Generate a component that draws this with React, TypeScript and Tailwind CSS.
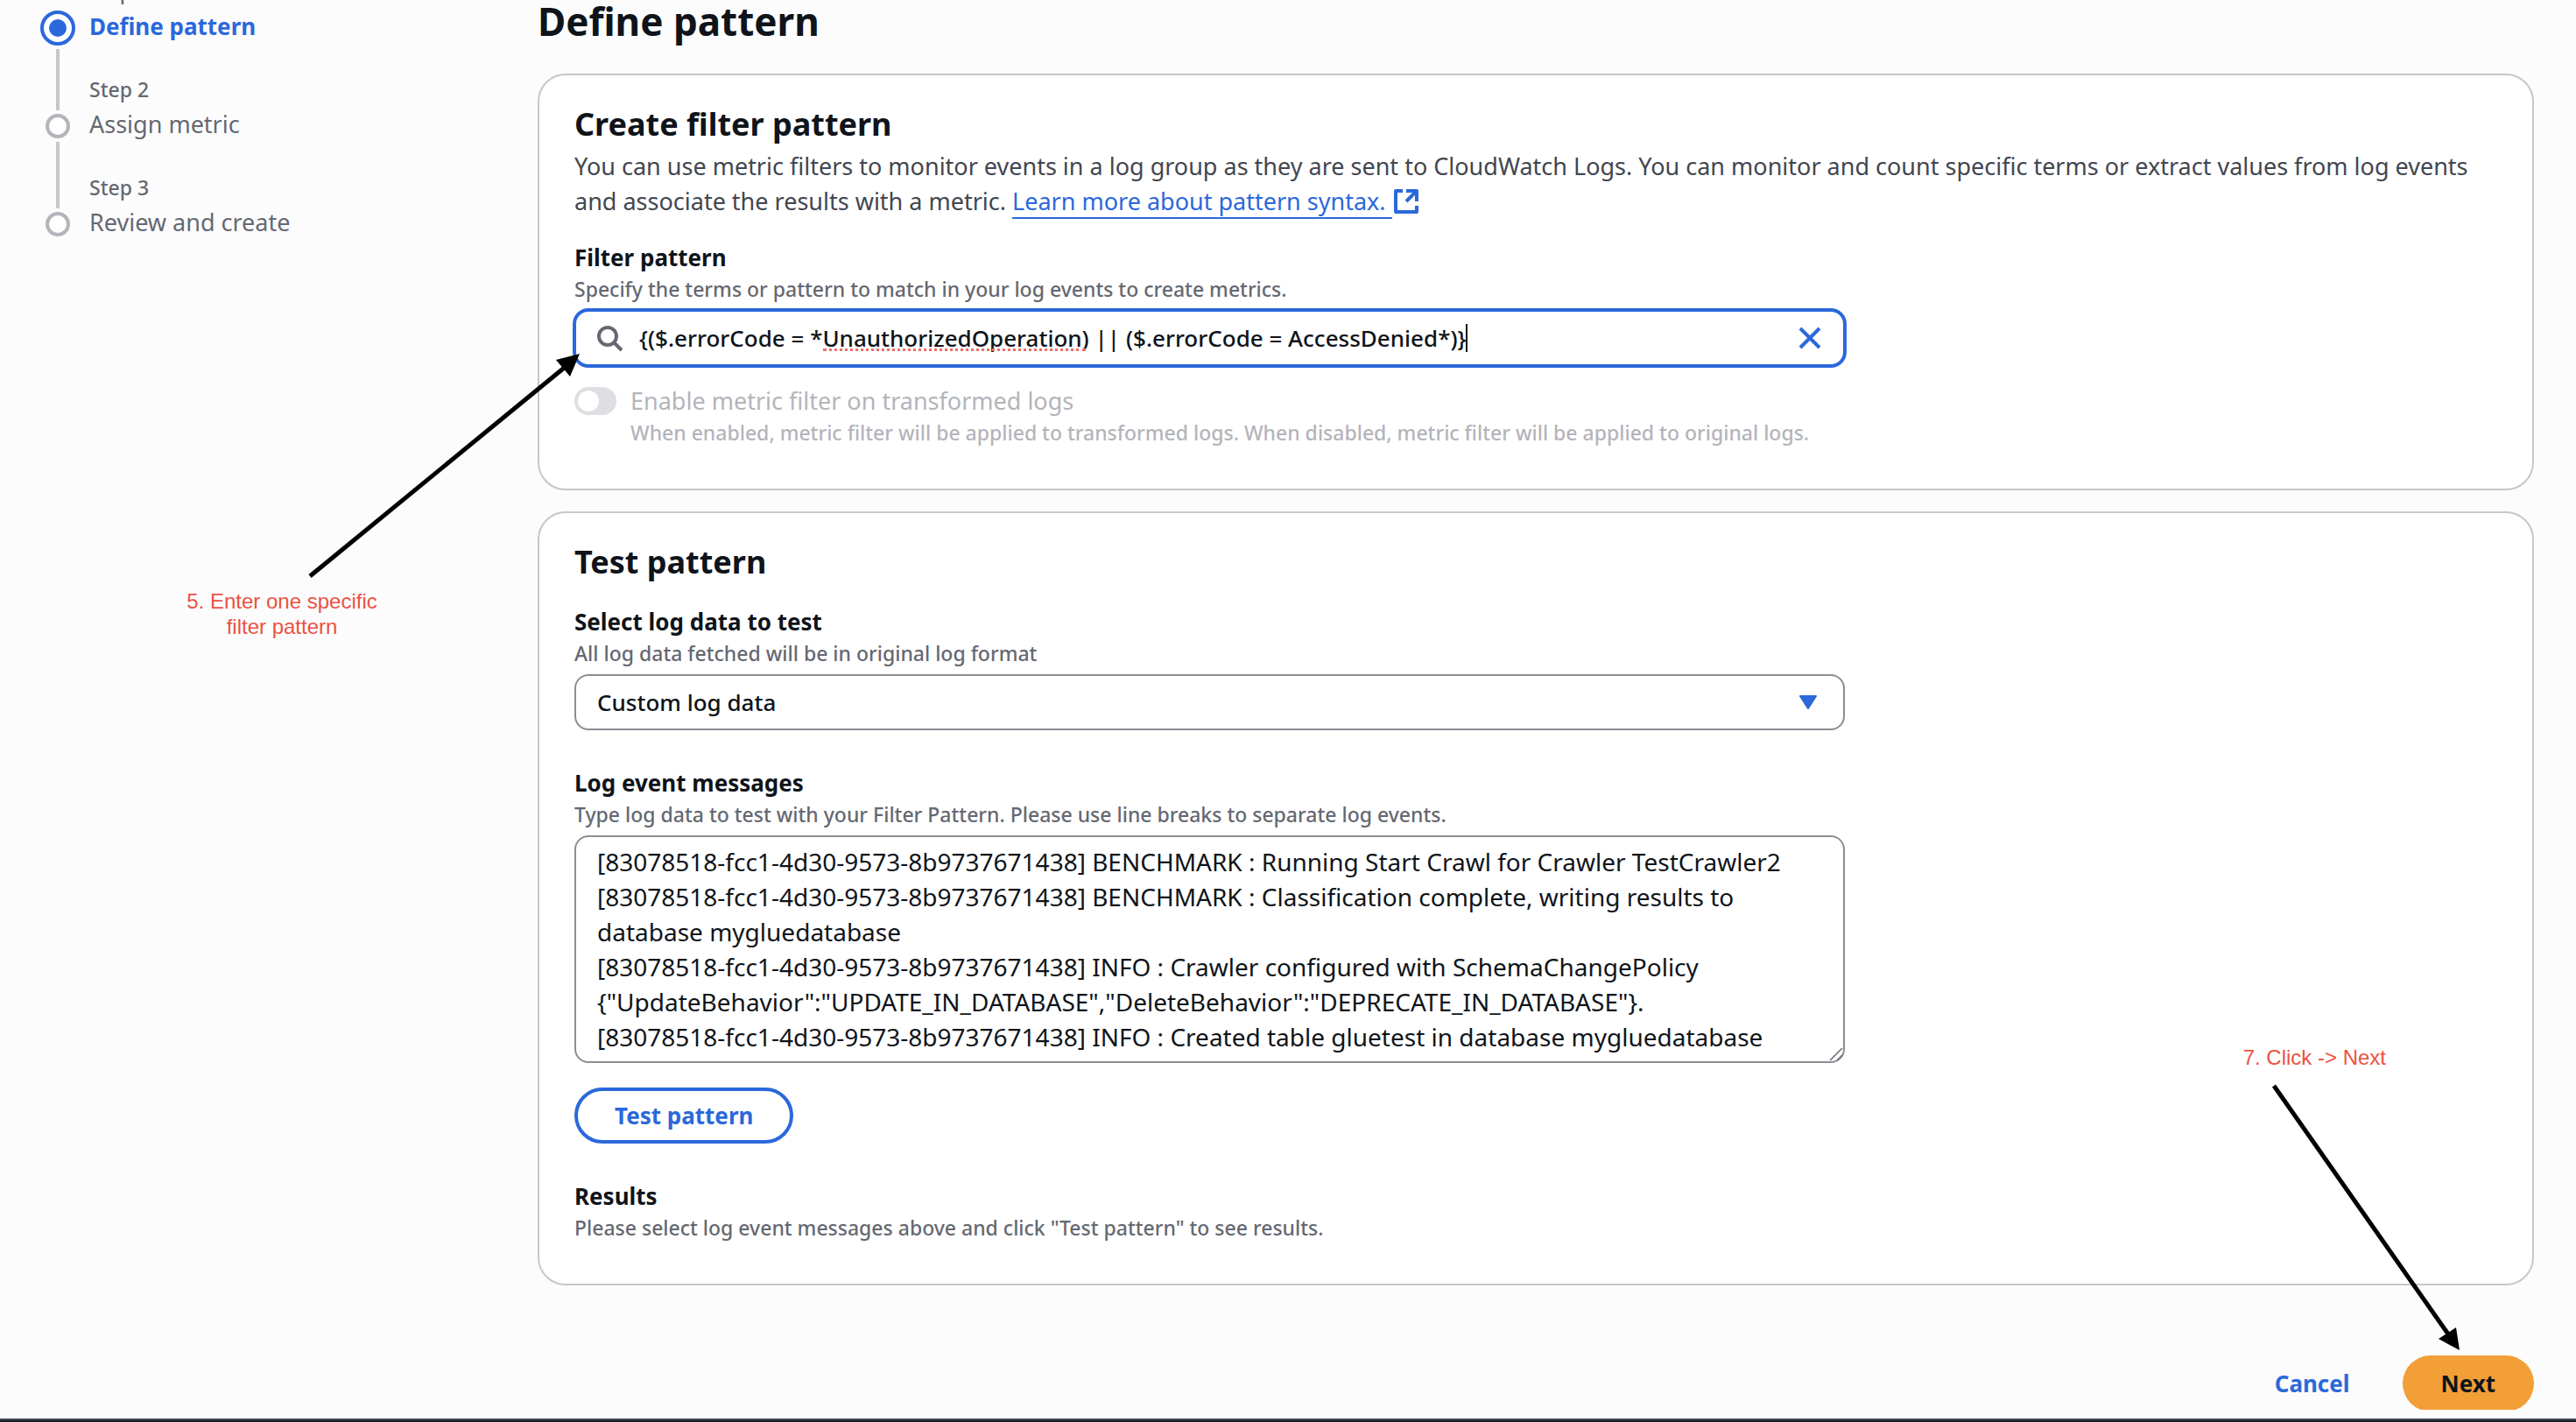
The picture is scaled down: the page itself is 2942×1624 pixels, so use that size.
import { useState } from "react";

const steps = [
  { label: "Step 1", title: "Define pattern", active: true },
  { label: "Step 2", title: "Assign metric", active: false },
  { label: "Step 3", title: "Review and create", active: false },
];

const logData = `[83078518-fcc1-4d30-9573-8b9737671438] BENCHMARK : Running Start Crawl for Crawler TestCrawler2
[83078518-fcc1-4d30-9573-8b9737671438] BENCHMARK : Classification complete, writing results to database mygluedatabase
[83078518-fcc1-4d30-9573-8b9737671438] INFO : Crawler configured with SchemaChangePolicy {"UpdateBehavior":"UPDATE_IN_DATABASE","DeleteBehavior":"DEPRECATE_IN_DATABASE"}.
[83078518-fcc1-4d30-9573-8b9737671438] INFO : Created table gluetest in database mygluedatabase`;

function StepMarker({ active }: { active: boolean }) {
  if (active) {
    return (
      <svg viewBox="0 0 40 40" className="size-10" aria-hidden="true">
        <circle cx="20" cy="20" r="18" fill="#fff" stroke="#2b68db" strokeWidth="4" />
        <circle cx="20" cy="20" r="10" fill="#2b68db" />
      </svg>
    );
  }
  return (
    <svg viewBox="0 0 28 28" className="size-7" aria-hidden="true">
      <circle cx="14" cy="14" r="12" fill="#fff" stroke="#b4b4bb" strokeWidth="4" />
    </svg>
  );
}

function Steps() {
  return (
    <nav aria-label="Steps" className="-mt-[26px] w-[614px] shrink-0 pl-[46px]">
      <ol>
        {steps.map((step, i) => (
          <li key={step.label} className="grid h-28 grid-cols-[40px_1fr] gap-x-4">
            <div className="flex flex-col items-center">
              <div className={i === 0 ? "h-[38px]" : "mb-1 h-10 w-1 bg-[#c6c6cd]"} />
              <StepMarker active={step.active} />
              {i < steps.length - 1 && <div className="mt-1 w-1 grow bg-[#c6c6cd]" />}
            </div>
            <div>
              <div className="text-[23px] leading-8 text-[#656871]">{step.label}</div>
              <div
                className={
                  step.active
                    ? "mt-1 text-[26px] leading-10 font-bold text-[#2b68db]"
                    : "mt-1 text-[27px] leading-10 font-normal text-[#656871]"
                }
              >
                {step.title}
              </div>
            </div>
          </li>
        ))}
      </ol>
    </nav>
  );
}

function Label({ htmlFor, children }: { htmlFor: string; children: string }) {
  return (
    <label htmlFor={htmlFor} className="block text-[26px] leading-10 font-bold">
      {children}
    </label>
  );
}

function Hint({ children }: { children: string }) {
  return <p className="text-[23px] leading-8 text-[#656871]">{children}</p>;
}

function ArrowToInput() {
  return (
    <svg viewBox="0 0 320 264" className="absolute top-[401px] left-[348px] w-[320px]" aria-hidden="true">
      <path d="M6 257 L300 16" stroke="#000" strokeWidth="5" />
      <path d="M314 3 L287 10 L303 29 Z" fill="#000" />
    </svg>
  );
}

function ArrowToNext() {
  return (
    <svg viewBox="0 0 224 308" className="absolute right-[128px] bottom-[78px] w-[224px]" aria-hidden="true">
      <path d="M7 2 L207 287" stroke="#000" strokeWidth="5" />
      <path d="M219 304 L195 291 L215 278 Z" fill="#000" />
    </svg>
  );
}

export default function App() {
  const [pattern, setPattern] = useState(
    "{($.errorCode = *UnauthorizedOperation) || ($.errorCode = AccessDenied*)}",
  );
  const [logs, setLogs] = useState(logData);

  return (
    <div className="relative flex min-h-screen flex-col overflow-hidden bg-[#fcfcfd] font-['Noto_Sans',sans-serif] text-[26px] leading-10 font-medium text-[#0f141a]">
      <div className="flex grow">
        <Steps />
        <main className="min-w-0 grow pr-12">
          <h1 className="mb-9 text-[44px] leading-12 font-bold">Define pattern</h1>

          <section className="rounded-[32px] border-2 border-[#c6c6cd] bg-white px-10 pt-8 pb-12">
            <h2 className="text-[36px] leading-12 font-bold">Create filter pattern</h2>
            <p className="mt-1 text-[27px] leading-10 font-normal text-[#424650]">
              You can use metric filters to monitor events in a log group as they are sent to CloudWatch Logs. You can
              monitor and count specific terms or extract values from log events and associate the results with a
              metric.{" "}
              <a href="#syntax" className="text-[#2b68db]">
                <span className="border-b-2 border-[#2b68db]">Learn more about pattern syntax. </span>
                <svg viewBox="0 0 28 28" className="ml-0.5 inline size-7 align-[-4px]" fill="none" stroke="#2b68db" strokeWidth="4" strokeLinejoin="round" aria-hidden="true">
                  <path d="M10 2H2V26H26V19" />
                  <path d="M14 2H26V14M26 2L14 14" />
                </svg>
              </a>
            </p>

            <div className="mt-6 grid grid-cols-3 gap-x-10">
              <div className="col-span-2">
                <Label htmlFor="pattern">Filter pattern</Label>
                <Hint>Specify the terms or pattern to match in your log events to create metrics.</Hint>
                <div className="relative mt-2 flex h-16 items-center rounded-2xl border-2 border-[#2b68db] bg-white px-6 ring-2 ring-[#2b68db]">
                  <svg viewBox="0 0 32 32" className="size-8 shrink-0" fill="none" stroke="#656871" strokeWidth="4" aria-hidden="true">
                    <circle cx="12" cy="14" r="10" />
                    <path d="M19 21L28 30" />
                  </svg>
                  <input
                    id="pattern"
                    type="text"
                    spellCheck={false}
                    value={pattern}
                    onChange={(e) => setPattern(e.target.value)}
                    className="ml-4 field-sizing-content bg-transparent text-[26px] leading-10 outline-none"
                  />
                  <span className="h-8 w-0.5 bg-[#0f141a]" aria-hidden="true" />
                  <span className="absolute top-[42px] left-[282px] w-[300px] border-b-3 border-dotted border-[#ee6f66]" aria-hidden="true" />
                  <button type="button" aria-label="Clear" className="ml-auto" onClick={() => setPattern("")}>
                    <svg viewBox="0 0 28 28" className="size-7" fill="none" stroke="#2b68db" strokeWidth="4" aria-hidden="true">
                      <path d="M3 3L25 25M25 3L3 25" />
                    </svg>
                  </button>
                </div>

                <div className="mt-5 flex gap-4">
                  <input
                    id="transformed"
                    type="checkbox"
                    role="switch"
                    disabled
                    className="mt-1 h-8 w-12 shrink-0 appearance-none rounded-full bg-[#dedee3] before:m-1 before:block before:size-6 before:rounded-full before:bg-white"
                  />
                  <div className="text-[#b4b4bb]">
                    <label htmlFor="transformed" className="block text-[27px] leading-10 font-normal">
                      Enable metric filter on transformed logs
                    </label>
                    <p className="text-[23px] leading-8">
                      When enabled, metric filter will be applied to transformed logs. When disabled, metric filter
                      will be applied to original logs.
                    </p>
                  </div>
                </div>
              </div>
            </div>
          </section>

          <section className="mt-6 rounded-[32px] border-2 border-[#c6c6cd] bg-white px-10 pt-8 pb-12">
            <h2 className="text-[36px] leading-12 font-bold">Test pattern</h2>
            <div className="mt-6 grid grid-cols-3 gap-x-10">
              <div className="col-span-2">
                <Label htmlFor="source">Select log data to test</Label>
                <Hint>All log data fetched will be in original log format</Hint>
                <div className="relative mt-2">
                  <select
                    id="source"
                    className="block h-16 w-full appearance-none rounded-2xl border-2 border-[#8c8c94] bg-white px-6 text-[26px]"
                  >
                    <option>Custom log data</option>
                  </select>
                  <svg viewBox="0 0 20 16" className="pointer-events-none absolute top-6 right-8 h-4 w-5" aria-hidden="true">
                    <path d="M1 1H19L10 15Z" fill="#2b68db" stroke="#2b68db" strokeWidth="2" strokeLinejoin="round" />
                  </svg>
                </div>

                <div className="mt-10">
                  <Label htmlFor="logs">Log event messages</Label>
                  <Hint>Type log data to test with your Filter Pattern. Please use line breaks to separate log events.</Hint>
                  <div className="relative mt-2">
                    <textarea
                      id="logs"
                      rows={6}
                      spellCheck={false}
                      value={logs}
                      onChange={(e) => setLogs(e.target.value)}
                      className="block w-full resize-none overflow-hidden rounded-2xl border-2 border-[#8c8c94] bg-white px-6 py-2 text-[28px] leading-10 font-normal"
                    />
                    <svg viewBox="0 0 16 16" className="pointer-events-none absolute right-0.5 bottom-0.5 size-4" stroke="#6b6b70" strokeWidth="1.5" aria-hidden="true">
                      <path d="M1 15L15 1M9 15L15 9" />
                    </svg>
                  </div>
                </div>

                <button type="button" className="mt-7 h-16 rounded-full border-4 border-[#2b68db] px-[42px] text-[26px] font-bold text-[#2b68db]">
                  Test pattern
                </button>

                <div className="mt-10">
                  <h3 className="text-[26px] leading-10 font-bold">Results</h3>
                  <Hint>Please select log event messages above and click "Test pattern" to see results.</Hint>
                </div>
              </div>
            </div>
          </section>

          <div className="mt-20 flex h-[62px] items-start justify-end gap-4 overflow-hidden text-[26px]">
            <button type="button" className="h-16 px-11 font-bold text-[#2b68db]">Cancel</button>
            <button type="button" className="h-16 rounded-full bg-[#f29f38] px-11 font-bold">Next</button>
          </div>
        </main>
      </div>
      <footer className="h-1 border-t-2 border-[#414750] bg-[#161d26]" />

      <p className="absolute top-[672px] left-[202px] w-[240px] text-center font-['Liberation_Sans',sans-serif] text-[24px] leading-[29px] font-normal text-[#ec5242]">
        5. Enter one specific filter pattern
      </p>
      <p className="absolute right-[217px] bottom-[402px] font-['Liberation_Sans',sans-serif] text-[24px] leading-[29px] font-normal text-[#ec5242]">
        7. Click -&gt; Next
      </p>
      <ArrowToInput />
      <ArrowToNext />
    </div>
  );
}
